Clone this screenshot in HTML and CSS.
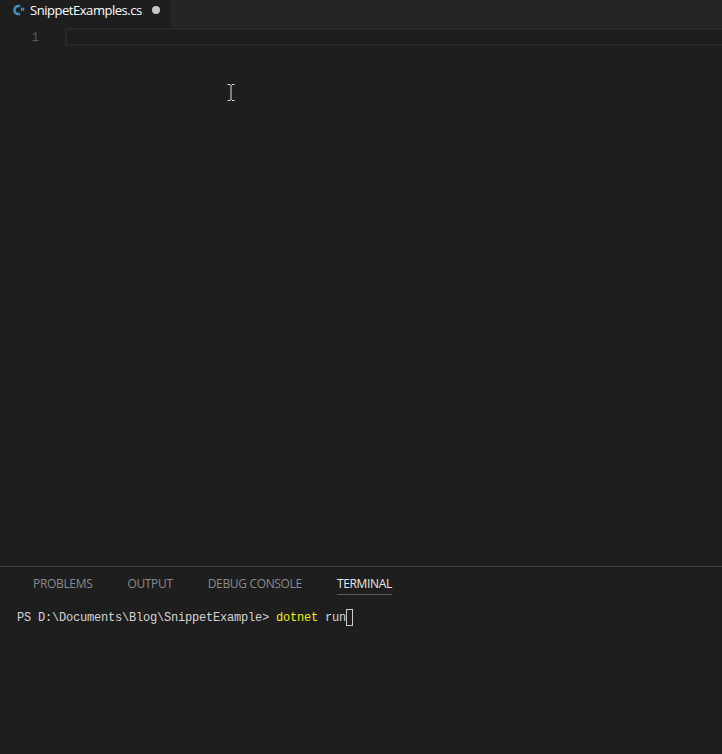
FILE: index.html
```html
<!DOCTYPE html>
<html lang="en">
<head>
<meta charset="utf-8">
<title>SnippetExamples.cs</title>
<link rel="stylesheet" href="styles.css">
</head>
<body>
<div class="app">
  <div class="tabbar">
    <div class="tab">
      <svg class="cs-icon" width="13" height="12" viewBox="0 0 13 12" aria-hidden="true">
        <path d="M8 2.300A4 4 0 1 0 8 9.700" fill="none" stroke="#3f8ec0" stroke-width="2.600"/>
        <path d="M9.500 3.500v3.500M11.300 3.500v3.500M8.800 4.500h3.600M8.800 6h3.600" fill="none" stroke="#3f8ec0" stroke-width="0.900"/>
      </svg>
      <span class="tab-name">SnippetExamples.cs</span>
      <span class="dirty"></span>
    </div>
  </div>
  <div class="editor">
    <div class="gutter">1</div>
    <div class="current-line"></div>
    <svg class="ibeam" width="8" height="17" viewBox="0 0 8 17" aria-hidden="true">
      <path d="M0.500 .5h2.500l1 1 1-1h2.500M4 1.500v14M0.500 16.500h2.500l1-1 1 1h2.500" fill="none" stroke="#e0e0e0" stroke-width="1"/>
    </svg>
  </div>
  <div class="panel">
    <div class="panel-tabs">
      <span class="panel-tab">PROBLEMS</span>
      <span class="panel-tab">OUTPUT</span>
      <span class="panel-tab">DEBUG CONSOLE</span>
      <span class="panel-tab active">TERMINAL</span>
    </div>
    <div class="terminal"><span>PS D:\Documents\Blog\SnippetExample&gt; </span><span class="cmd">dotnet</span><span> run</span><span class="cursor"></span></div>
  </div>
</div>
</body>
</html>
```
FILE: styles.css
```css
* { box-sizing: border-box; }
html, body { margin: 0; height: 100%; background: #1e1e1e; overflow: hidden; }
.app { display: flex; flex-direction: column; height: 754px; width: 722px; }
.tabbar { display: flex; height: 27px; background: #252526; flex: none; }
.tab {
  width: 170px; background: #1e1e1e; display: flex; align-items: center;
  padding: 0 10px 8px 12px; color: #fff;
  font: 13px "Open Sans", "Noto Sans", sans-serif;
}
.cs-icon { flex: none; margin-right: 5px; }
.tab-name { letter-spacing: -0.46px; white-space: nowrap; }
.dirty { width: 8px; height: 8px; border-radius: 50%; background: #c5c5c5; margin-left: 10px; flex: none; }
.editor { position: relative; flex: 1; display: flex; padding-top: 1px; }
.gutter {
  width: 65px; flex: none; height: 18px; padding-right: 26px; text-align: right;
  color: #5a5a5a; font: 12px/21px "Liberation Mono", monospace;
}
.current-line { flex: 1; height: 18px; border: 2px solid #282828; border-right: 0; }
.ibeam { position: absolute; left: 227px; top: 57px; }
.panel { height: 188px; flex: none; border-top: 1px solid #414141; padding: 0 17px; }
.panel-tabs { display: flex; gap: 35px; padding-left: 16px; height: 28px; margin-top: 7px; font: 12px "Open Sans", "Noto Sans", sans-serif; letter-spacing: -0.33px; color: #8a8a8a; }
.panel-tab { height: 21px; line-height: 20px; white-space: nowrap; }
.panel-tab.active { color: #e7e7e7; border-bottom: 1px solid #5a5a5a; }
.terminal { display: flex; white-space: pre; margin-top: 7px; height: 18px; font: 12px/18px "Liberation Mono", monospace; letter-spacing: -0.2px; color: #d4d4d4; }
.cmd { color: #eeee1c; }
.cursor { width: 7px; height: 17px; border: 1px solid #cccccc; }
```
